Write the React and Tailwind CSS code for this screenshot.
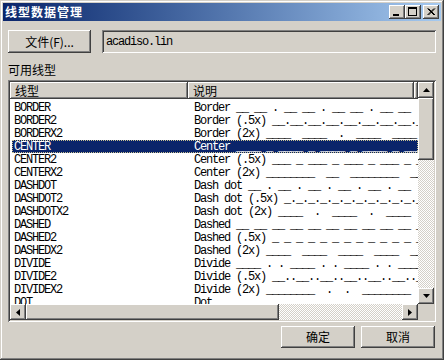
import React from "react";

const RAISED =
  "shadow-[inset_-1px_-1px_#404040,inset_1px_1px_#ffffff,inset_-2px_-2px_#808080]";
const SUNKEN =
  "shadow-[inset_1px_1px_#808080,inset_-1px_-1px_#ffffff,inset_2px_2px_#404040,inset_-2px_-2px_#d4d0c8]";
const DITHER =
  "bg-[repeating-conic-gradient(#ffffff_0%_25%,#d4d0c8_0%_50%)] bg-[length:2px_2px]";
const CJK = "font-['Noto_Sans_CJK_SC','Noto_Sans',sans-serif]";
const MONO = "font-['Liberation_Mono',monospace] tracking-[-1.2px]";

const rows = [
  ["BORDER", "Border __ __ . __ __ . __ __ . __ __ . __ __ ."],
  ["BORDER2", "Border (.5x) __.__.__.__.__.__.__.__.__.__.__."],
  ["BORDERX2", "Border (2x) ____  ____  .  ____  ____  .  ___"],
  ["CENTER", "Center ____ _ ____ _ ____ _ ____ _ ____ _ ____"],
  ["CENTER2", "Center (.5x) ___ _ ___ _ ___ _ ___ _ ___ _ ___"],
  ["CENTERX2", "Center (2x) ________  __  ________  __  _____"],
  ["DASHDOT", "Dash dot __ . __ . __ . __ . __ . __ . __"],
  ["DASHDOT2", "Dash dot (.5x) _._._._._._._._._._._._._._._."],
  ["DASHDOTX2", "Dash dot (2x) ____  .  ____  .  ____  .  ___"],
  ["DASHED", "Dashed __ __ __ __ __ __ __ __ __ __ __ __ __ _"],
  ["DASHED2", "Dashed (.5x) _ _ _ _ _ _ _ _ _ _ _ _ _ _ _ _ _ _ _ _ _"],
  ["DASHEDX2", "Dashed (2x) ____  ____  ____  ____  ____  ___"],
  ["DIVIDE", "Divide ____ . . ____ . . ____ . . ____ . . ____"],
  ["DIVIDE2", "Divide (.5x) __..__..__..__..__..__..__..__.._"],
  ["DIVIDEX2", "Divide (2x) ________  .  .  ________  .  .  _"],
  ["DOT", "Dot . . . . . . . . . . . . . . . . . . . . . . . . . ."],
];

/* small glyphs */
function Arrow({ dir }) {
  const pts = {
    up: "3.5,0 7,4 0,4",
    down: "0,0 7,0 3.5,4",
    left: "4,0 4,7 0,3.5",
    right: "0,0 0,7 4,3.5",
  }[dir];
  const vertical = dir === "up" || dir === "down";
  return (
    <svg
      width={vertical ? 7 : 4}
      height={vertical ? 4 : 7}
      viewBox={vertical ? "0 0 7 4" : "0 0 4 7"}
    >
      <polygon points={pts} fill="#000" />
    </svg>
  );
}

function TitleButton({ kind, className = "" }) {
  return (
    <div className={`w-[16px] h-[14px] bg-[#d4d0c8] ${RAISED} ${className}`}>
      <svg width="16" height="14" viewBox="0 0 16 14" shapeRendering="crispEdges">
        {kind === "min" && <rect x="4" y="9" width="6" height="2" fill="#000" />}
        {kind === "max" && (
          <>
            <rect x="3" y="2" width="9" height="2" fill="#000" />
            <rect x="3" y="2" width="1" height="9" fill="#000" />
            <rect x="11" y="2" width="1" height="9" fill="#000" />
            <rect x="3" y="10" width="9" height="1" fill="#000" />
          </>
        )}
        {kind === "close" && (
          <path
            d="M4.5 3.5 L11 10 M5.5 3.5 L12 10 M11 3.5 L4.5 10 M12 3.5 L5.5 10"
            stroke="#000"
            strokeWidth="1"
            shapeRendering="auto"
          />
        )}
      </svg>
    </div>
  );
}

function ScrollBtn({ dir }) {
  return (
    <div
      className={`w-[16px] h-[16px] shrink-0 bg-[#d4d0c8] ${RAISED} flex items-center justify-center`}
    >
      <Arrow dir={dir} />
    </div>
  );
}

export default function App() {
  return (
    <div
      className={`w-[444px] h-[360px] bg-[#d4d0c8] p-[3px] flex flex-col ${CJK} text-[12px] text-black shadow-[inset_-1px_-1px_#404040,inset_1px_1px_#d4d0c8,inset_-2px_-2px_#808080,inset_2px_2px_#ffffff] overflow-hidden`}
    >
      {/* TITLE BAR */}
      <div className="h-[18px] shrink-0 bg-linear-to-r from-[#0a246a] to-[#a6caf0] flex items-center pl-[2px] pr-[2px]">
        <span className="text-white font-bold text-[12px] leading-[18px] tracking-[1px]">
          线型数据管理
        </span>
        <div className="ml-auto flex items-center">
          <TitleButton kind="min" />
          <TitleButton kind="max" />
          <TitleButton kind="close" className="ml-[2px]" />
        </div>
      </div>

      <div className="flex-1 flex flex-col px-[5px]">
        {/* FILE ROW */}
        <div className="mt-[9px] h-[23px] flex">
          <button
            className={`w-[83px] h-full bg-[#d4d0c8] ${RAISED} text-[12px] leading-none flex items-center justify-center`}
          >
            文件(F)...
          </button>
          <div
            className={`ml-[11px] flex-1 h-full bg-[#d4d0c8] ${SUNKEN} flex items-center pl-[4px]`}
          >
            <span className={`${MONO} text-[12px]`}>acadiso.lin</span>
          </div>
        </div>

        {/* LABEL */}
        <div className="mt-[9px] h-[16px] leading-[16px]">可用线型</div>

        {/* LIST VIEW */}
        <div className={`mt-[2px] h-[242px] bg-white ${SUNKEN} p-[2px] flex flex-col`}>
          <div className="flex flex-1 min-h-0">
            {/* main */}
            <div className="flex-1 min-w-0 flex flex-col overflow-hidden">
              <div className="h-[17px] shrink-0 flex bg-[#d4d0c8]">
                <div className={`w-[178px] h-full ${RAISED} pl-[5px] leading-[17px]`}>
                  线型
                </div>
                <div className={`w-[226px] h-full ${RAISED} pl-[5px] leading-[17px]`}>
                  说明
                </div>
                <div className={`flex-1 h-full ${RAISED}`} />
              </div>
              <div className="flex-1 min-h-0 overflow-hidden pt-[2px]">
                {rows.map(([name, desc], i) => {
                  const sel = i === 3;
                  return (
                    <div
                      key={name}
                      className={`h-[13px] ml-[2px] flex whitespace-pre ${MONO} text-[12px] leading-[13px] overflow-hidden ${
                        sel
                          ? "bg-[#0a246a] text-white outline-1 outline-dotted outline-[#c8c090] -outline-offset-1"
                          : ""
                      }`}
                    >
                      <div className="w-[182px] shrink-0 pl-[2px] overflow-hidden relative top-[1px]">
                        {name}
                      </div>
                      <div className="flex-1 overflow-hidden relative top-[1px]">{desc}</div>
                    </div>
                  );
                })}
              </div>
            </div>
            {/* vertical scrollbar */}
            <div className="w-[16px] flex flex-col">
              <ScrollBtn dir="up" />
              <div className={`h-[62px] shrink-0 bg-[#d4d0c8] ${RAISED}`} />
              <div className={`flex-1 ${DITHER}`} />
              <ScrollBtn dir="down" />
            </div>
          </div>
          {/* horizontal scrollbar */}
          <div className="h-[16px] shrink-0 flex">
            <ScrollBtn dir="left" />
            <div className={`w-[253px] h-full bg-[#d4d0c8] ${RAISED}`} />
            <div className={`flex-1 h-full ${DITHER}`} />
            <ScrollBtn dir="right" />
            <div className="w-[16px] h-full bg-[#d4d0c8]" />
          </div>
        </div>

        {/* BUTTONS */}
        <div className="mt-[4px] flex justify-end gap-[6px] pr-[1px]">
          <button
            className={`w-[74px] h-[22px] bg-[#d4d0c8] ${RAISED} text-[12px] leading-none`}
          >
            确定
          </button>
          <button
            className={`w-[74px] h-[22px] bg-[#d4d0c8] ${RAISED} text-[12px] leading-none`}
          >
            取消
          </button>
        </div>
      </div>
    </div>
  );
}
